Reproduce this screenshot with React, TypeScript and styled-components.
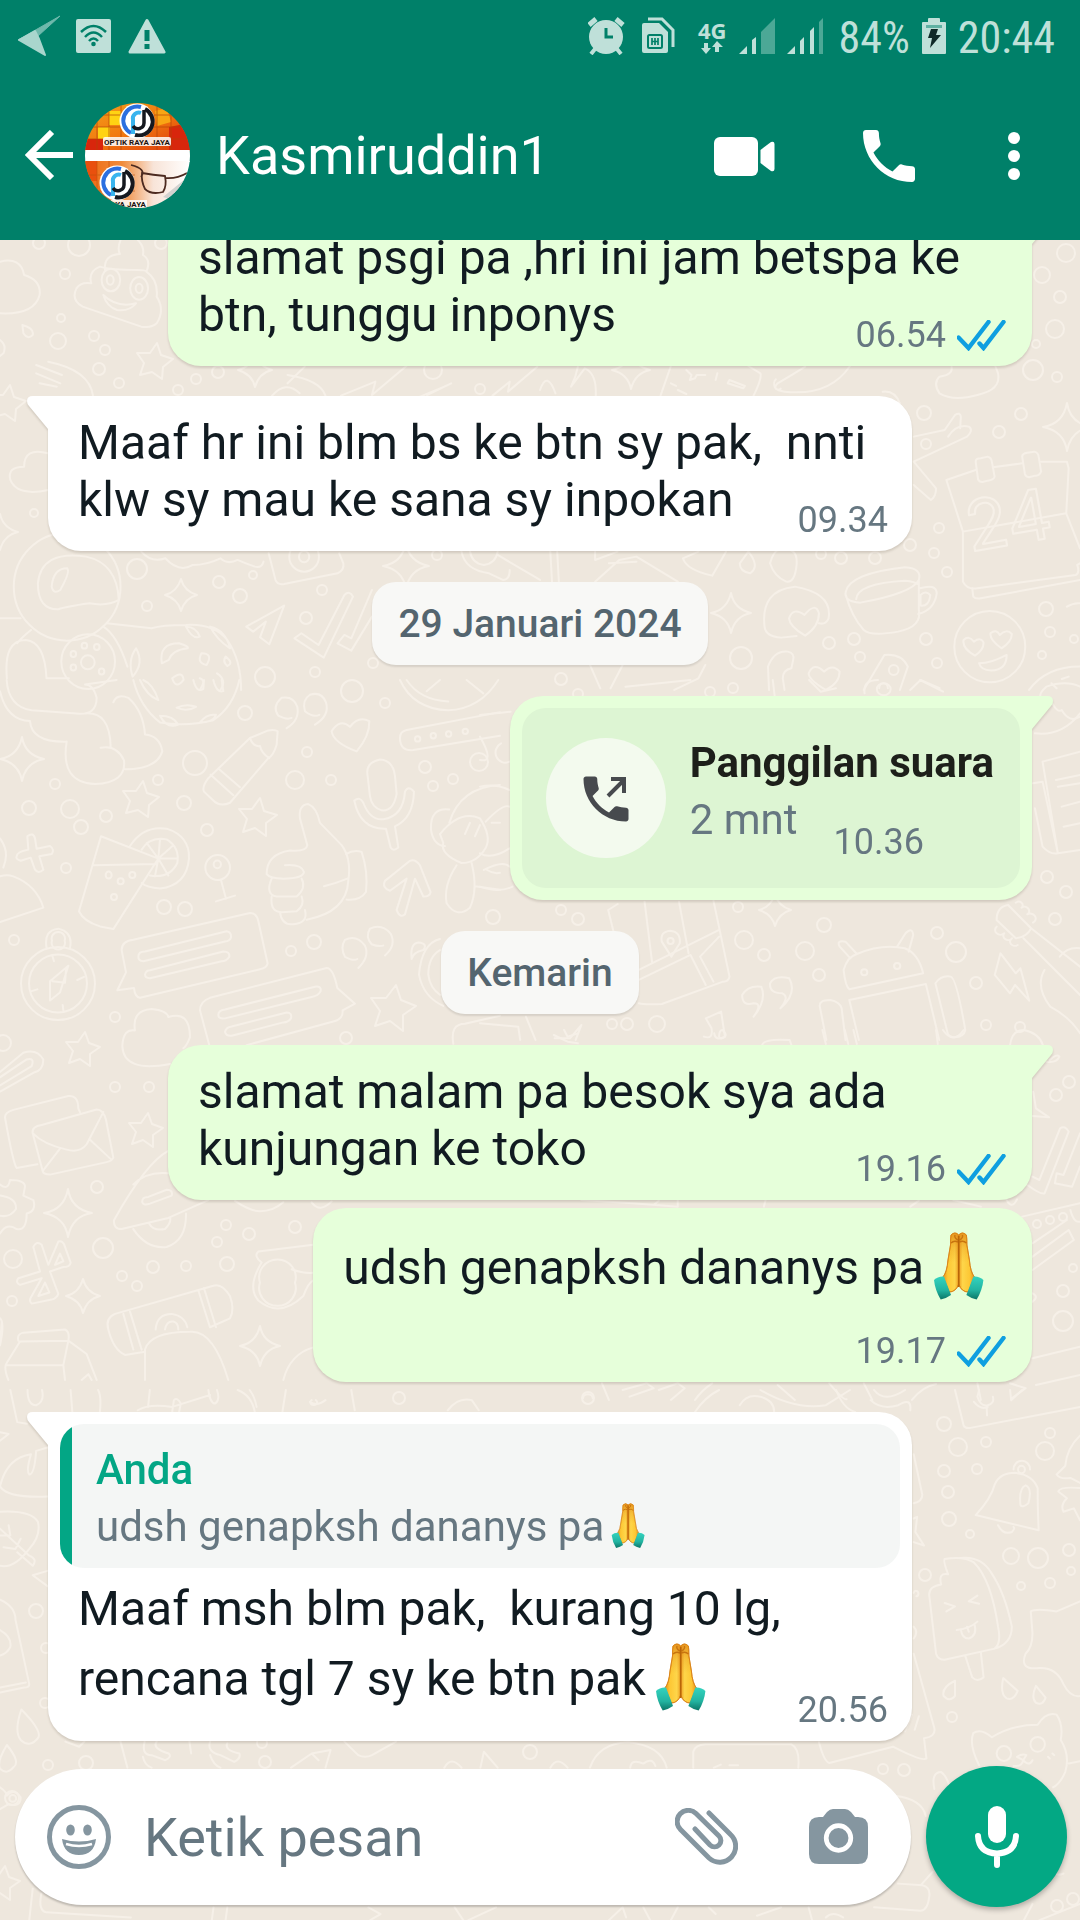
import React from "react";
import styled, { createGlobalStyle } from "styled-components";

const GlobalStyle = createGlobalStyle`
  *, *::before, *::after { box-sizing: border-box; }
  html, body { margin: 0; padding: 0; }
  body { font-family: Roboto, "Noto Sans", sans-serif; background: #eee7dd; }
  button { font: inherit; color: inherit; background: none; border: 0; padding: 0; cursor: pointer; }
  svg { display: block; flex: none; }
`;

/* ---------- layout ---------- */

const Screen = styled.div`
  height: 100vh;
  display: flex;
  flex-direction: column;
  overflow: hidden;
`;

const Header = styled.header`
  flex: none;
  background: #008069;
  color: #fff;
  position: relative;
  z-index: 1;
`;

const StatusBar = styled.div`
  height: 72px;
  padding: 0 25px 0 18px;
  display: flex;
  align-items: center;
  justify-content: space-between;
  color: #bfe0d9;
`;

const StatusGroup = styled.div<{ $gap: number }>`
  display: flex;
  align-items: center;
  gap: ${(p) => p.$gap}px;
`;

const StatusText = styled.span`
  padding-top: 3px;
  font-family: "Roboto Condensed", Roboto, sans-serif;
  font-size: 44px;
  line-height: 46px;
`;

const NetType = styled.span`
  display: flex;
  flex-direction: column;
  align-items: center;
  font-family: "Open Sans", "Noto Sans", sans-serif;
  font-size: 22px;
  font-weight: 700;
  line-height: 22px;
`;

const AppBar = styled.div`
  height: 168px;
  padding: 0 54px 0 25px;
  display: flex;
  align-items: center;
`;

const Back = styled.button`
  display: flex;
  align-items: center;
  gap: 10px;
  padding-bottom: 2px;
`;

const Title = styled.h1`
  flex: 1;
  margin: 0 0 0 26px;
  font-size: 54px;
  font-weight: 400;
  line-height: 64px;
`;

const Actions = styled.div`
  display: flex;
  align-items: center;
  gap: 87px;
`;

const IconButton = styled.button`
  display: flex;
  align-items: center;
  justify-content: center;
`;

const Body = styled.main`
  flex: 1;
  min-height: 0;
  position: relative;
  display: flex;
  flex-direction: column;
  background: #eee7dd;
`;

const Paper = styled.svg`
  position: absolute;
  inset: 0;
  width: 100%;
  height: 100%;
  fill: none;
  stroke: #f6f0e8;
  stroke-width: 2;
  stroke-linecap: round;
  stroke-linejoin: round;
  path, ellipse, circle, rect { vector-effect: non-scaling-stroke; }
`;

const Messages = styled.section`
  flex: 1;
  min-height: 0;
  position: relative;
  display: flex;
  flex-direction: column;
  justify-content: flex-end;
  overflow: hidden;
  padding: 0 48px 25px;
`;

/* ---------- messages ---------- */

const DayChip = styled.time`
  flex: none;
  align-self: center;
  margin: 31px 0 1px;
  padding: 19px 26px 18px;
  border-radius: 24px;
  background: #f8f8f6;
  box-shadow: 0 2px 2px rgba(0, 0, 0, 0.1);
  color: #54656f;
  font-size: 39px;
  font-weight: 500;
  line-height: 46px;
`;

type Side = "in" | "out";

const Bubble = styled.article<{ $side: Side; $tail: boolean; $joined?: boolean }>`
  flex: none;
  position: relative;
  align-self: ${(p) => (p.$side === "in" ? "flex-start" : "flex-end")};
  max-width: 864px;
  margin-top: ${(p) => (p.$joined ? 8 : 30)}px;
  border-radius: 33px;
  border-top-left-radius: ${(p) => (p.$tail && p.$side === "in" ? 0 : 33)}px;
  border-top-right-radius: ${(p) => (p.$tail && p.$side === "out" ? 0 : 33)}px;
  background: ${(p) => (p.$side === "in" ? "#fff" : "#e6ffda")};
  color: #111b21;
  filter: drop-shadow(0 2px 1px rgba(60, 50, 30, 0.16));
`;

const TailShape = styled.svg<{ $side: Side }>`
  position: absolute;
  top: 0;
  ${(p) => (p.$side === "in" ? "right: 100%;" : "left: 100%;")}
  fill: ${(p) => (p.$side === "in" ? "#fff" : "#e6ffda")};
`;

const Content = styled.div<{ $afterQuote?: boolean }>`
  display: grid;
  padding: ${(p) => (p.$afterQuote ? 12 : 18)}px 24px 10px;
`;

const Words = styled.p`
  grid-area: 1 / 1;
  margin: 0;
  padding: 0 6px 13px;
  font-size: 48px;
  line-height: 57px;
  white-space: pre-wrap;
`;

const Meta = styled.footer<{ $below?: boolean }>`
  grid-area: ${(p) => (p.$below ? "2 / 1" : "1 / 1")};
  align-self: end;
  justify-self: end;
  display: flex;
  align-items: center;
  gap: 11px;
  margin-top: ${(p) => (p.$below ? 10 : 0)}px;
  color: #667781;
  font-size: 36px;
  line-height: 42px;
`;

const Quote = styled.blockquote`
  margin: 0 12px;
  padding: 21px 24px 13px 36px;
  border-radius: 24px;
  background: linear-gradient(to right, #03a685 12px, #f4f6f5 12px);
  color: #667781;
  font-size: 42px;
  line-height: 56px;
`;

const QuoteWrap = styled.div`
  padding-top: 12px;
  width: 864px;
  max-width: 100%;
`;

const QuoteName = styled.strong`
  display: block;
  margin-bottom: 4px;
  color: #03a685;
  font-weight: 500;
  line-height: 50px;
`;

const Hands = styled.svg<{ $drop: number }>`
  display: inline-block;
  vertical-align: ${(p) => -p.$drop}px;
`;

const CallCard = styled.div`
  display: flex;
  align-items: center;
  gap: 24px;
  margin: 12px;
  padding: 30px 26px 30px 24px;
  border-radius: 24px;
  background: #ddf5d3;
`;

const CallDisc = styled.span`
  width: 120px;
  height: 120px;
  flex: none;
  display: flex;
  align-items: center;
  justify-content: center;
  border-radius: 50%;
  background: #f3faee;
`;

const CallInfo = styled.div`
  display: flex;
  flex-direction: column;
  padding-bottom: 13px;
  font-size: 42px;
  line-height: 50px;
`;

const CallTitle = styled.strong`
  margin-bottom: 7px;
  color: #1d1f1a;
  font-weight: 700;
`;

const CallDetail = styled.div`
  display: flex;
  height: 50px;
  gap: 36px;
  color: #667781;
  time { font-size: 36px; padding-top: 26px; line-height: 42px; }
`;

/* ---------- composer ---------- */

const Composer = styled.form`
  flex: none;
  position: relative;
  display: flex;
  align-items: center;
  gap: 15px;
  padding: 0 13px 13px 15px;
`;

const Field = styled.div`
  flex: 1;
  min-width: 0;
  height: 136px;
  display: flex;
  align-items: center;
  padding: 0 43px 0 32px;
  border-radius: 68px;
  background: #fff;
  box-shadow: 0 2px 2px rgba(0, 0, 0, 0.2);
  color: #8596a0;
`;

const TextBox = styled.input`
  flex: 1;
  min-width: 0;
  margin-left: 33px;
  padding: 2px 0 0;
  border: 0;
  outline: 0;
  background: none;
  color: #111b21;
  font-family: Roboto, sans-serif;
  font-size: 54px;
  line-height: 64px;
  &::placeholder { color: #667781; opacity: 1; }
`;

const FieldActions = styled.div`
  display: flex;
  align-items: center;
  gap: 71px;
`;

const Record = styled.button`
  width: 141px;
  height: 141px;
  flex: none;
  display: flex;
  align-items: center;
  justify-content: center;
  border-radius: 50%;
  background: #03a884;
  box-shadow: 0 3px 5px rgba(0, 0, 0, 0.25);
`;

/* ---------- icons ---------- */

const PHONE =
  "M6.62 10.79c1.44 2.83 3.76 5.14 6.59 6.59l2.2-2.2c.27-.27.67-.36 1.02-.24 1.12.37 2.33.57 3.57.57.55 0 1 .45 1 1V20c0 .55-.45 1-1 1-9.39 0-17-7.61-17-17 0-.55.45-1 1-1h3.5c.55 0 1 .45 1 1 0 1.25.2 2.45.57 3.57.11.35.03.74-.25 1.02l-2.2 2.2z";

function Ticks() {
  return (
    <svg width="51" height="31" viewBox="0 0 51 31" fill="none" stroke="#0f9fe0" strokeWidth="4.4" role="img" aria-label="Dibaca">
      <path d="M1.500 17.500L11.500 28L31.500 2" strokeLinecap="round" />
      <path d="M22.500 23.500L26.500 28L46.500 2" strokeLinecap="round" />
    </svg>
  );
}

function Pray({ small }: { small?: boolean }) {
  return (
    <Hands
      $drop={small ? 12 : 23}
      width={small ? 54 : 78}
      height={small ? 54 : 81}
      viewBox={small ? "0 0 80 81" : "1 0 78 81"}
      role="img"
      aria-label="🙏"
    >
      <defs>
        <linearGradient id="palm" x1="0" x2="1">
          <stop offset="0" stopColor="#e8921d" />
          <stop offset=".3" stopColor="#fdc734" />
          <stop offset=".75" stopColor="#fed64a" />
          <stop offset="1" stopColor="#eda024" />
        </linearGradient>
        <linearGradient id="tips" x1="0" y1="0" x2="0" y2="1">
          <stop offset="0" stopColor="#df8414" stopOpacity=".75" />
          <stop offset=".25" stopColor="#df8414" stopOpacity=".25" />
          <stop offset=".5" stopColor="#df8414" stopOpacity="0" />
        </linearGradient>
        <linearGradient id="cuff" x1="0" y1="0" x2="0" y2="1">
          <stop offset="0" stopColor="#34d3bf" />
          <stop offset=".6" stopColor="#22b3a0" />
          <stop offset="1" stopColor="#0b7566" />
        </linearGradient>
      </defs>
      {["", "translate(71.4 0) scale(-1 1)"].map((t) => (
        <g key={t} transform={t}>
          {["url(#palm)", "url(#tips)"].map((f) => (
            <path key={f} d="M28 9Q32 5 35.700 9V58Q33 66 26 66L20 51Q24 46 25 34L27.500 19Q27.500 12 28 9Z" fill={f} stroke="#d98214" strokeWidth=".8" />
          ))}
          <path d="M28 17Q31 14 35 16M32 9Q31 12 35 14" fill="none" stroke="#c8740f" strokeWidth="1.400" />
          <path d="M11 54Q15 50 21 50.500L28 69Q24 72 17.700 73.500Q12 64 11 54Z" fill="url(#cuff)" />
        </g>
      ))}
      <path d="M35.700 10V61" stroke="#b96508" strokeWidth="1.600" />
    </Hands>
  );
}

function Avatar() {
  const logo = (x: number, y: number) => (
    <g transform={`translate(${x} ${y})`}>
      <circle r="17.500" fill="#fff" />
      <path d="M-6 12A14 14 0 0 1 4-14" fill="none" stroke="#2b6fe0" strokeWidth="4" />
      <path d="M-4 13V-1A6 6 0 0 1 4-8" fill="none" stroke="#39b4ee" strokeWidth="4" />
      <path d="M8-12A14 14 0 0 1-2 14" fill="none" stroke="#15181f" strokeWidth="4" />
      <path d="M7-11V2A6 6 0 0 1-4 5" fill="none" stroke="#15181f" strokeWidth="3.500" />
    </g>
  );
  return (
    <svg width="105" height="105" viewBox="0 0 105 105" role="img" aria-label="Foto profil">
      <defs>
        <clipPath id="disc"><circle cx="52.500" cy="52.500" r="52.500" /></clipPath>
        <linearGradient id="fire" x1="0" x2="1" y1="0" y2="1">
          <stop offset="0" stopColor="#f3a41c" />
          <stop offset=".5" stopColor="#f2780f" />
          <stop offset="1" stopColor="#d9330c" />
        </linearGradient>
        <linearGradient id="fade" x1="0" x2="1">
          <stop offset="0" stopColor="#ee6a12" />
          <stop offset=".35" stopColor="#f08a3a" />
          <stop offset=".65" stopColor="#f8e4d8" />
          <stop offset="1" stopColor="#fff" />
        </linearGradient>
      </defs>
      <g clipPath="url(#disc)">
        <rect width="105" height="48" fill="url(#fire)" />
        <path d="M24 8h12v14h-12zM13 24h12v12h-12z" fill="#ffd313" />
        <path d="M0 36h18v12h-18zM84 24l21-4v28h-21z" fill="#d8260c" />
        <path d="M70 8l12-3 4 14-14 4z" fill="#f9a514" />
        <path d="M12 0V48M24 0V48M36 0V48M72 0V48M86 0V48M0 12H105M0 24H105M0 36H105" stroke="#b44708" strokeWidth="1" opacity=".7" />
        <rect y="47" width="105" height="12" fill="#fff" />
        <rect y="58" width="105" height="47" fill="url(#fade)" />
        <path d="M0 58h12v20h-12z" fill="#e9500e" />
        <path d="M12 58V105M24 58V105M0 72H50M0 88H50" stroke="#c4520c" strokeWidth="1" opacity=".6" />
        <path d="M78 94l27-22v30z" fill="#d4d2d0" />
        <path d="M57 70Q68 72 80 73Q82 83 78 89Q66 92 60 86Q56 78 57 70ZM80 75Q92 76 102 70M56 74Q62 66 46 62" fill="none" stroke="#4c2a20" strokeWidth="1.800" />
        {logo(52, 18)}
        {logo(32, 80)}
        <rect x="18" y="34" width="68" height="9" rx="2" fill="#fff" opacity=".85" />
        <text x="52" y="42" fontSize="8" fontWeight="700" textAnchor="middle" fill="#20140f">OPTIK RAYA JAYA</text>
        <rect x="26" y="97" width="36" height="8" fill="#fff" opacity=".85" />
        <text x="61" y="104" fontSize="8" fontWeight="700" textAnchor="end" fill="#20140f">RAYA JAYA</text>
      </g>
    </svg>
  );
}

/* ---------- wallpaper ---------- */

/* x, y, radius of each bubble of the doodle paper */
const RINGS: number[][] = [
  [39,243,6],[79,245,11],[161,243,6],[65,274,5],[61,318,4],[58,341,8],[94,336,5],[105,350,5],[99,369,6],[119,383,5],[196,379,5],[218,372,6],[178,390,5],
  [137,569,10],[147,606,5],[219,582,6],[240,596,7],[253,575,4],[322,590,5],[306,618,6],[315,672,5],[373,663,5],[265,677,10],[34,513,4],[433,370,9],[480,389,5],[437,555,5],
  [1066,253,9],[1042,275,8],[1060,297,6],[1055,329,9],[1036,344,4],[1033,370,10],[1057,377,5],[924,413,7],[1021,414,6],[999,432,6],[926,444,5],[939,528,5],[910,545,6],[934,553,5],
  [947,572,5],[841,558,6],[875,558,6],[821,554,5],[1046,609,7],[1050,632,5],[1042,655,4],[937,663,5],[926,639,6],[854,639,6],[829,643,6],[860,657,5],[741,658,11],[561,679,6],[1074,639,4],
  [55,784,5],[29,808,7],[70,809,9],[81,827,7],[106,816,6],[158,780,5],[195,763,12],[184,803,7],[245,713,7],[352,691,11],[385,703,5],[307,752,5],[295,780,9],[331,780,5],[425,767,6],
  [479,762,9],[453,779,5],[433,786,5],[207,830,6],[66,868,5],[164,907,7],[185,909,7],[14,940,5],[115,1017,5],[291,951,5],[314,942,7],[115,1087,5],[149,1087,5],[97,1187,6],[103,1248,10],
  [13,1259,9],[122,1276,5],[137,1286,5],[153,1267,6],[186,1266,5],[217,1242,5],[226,1225,5],[249,1234,6],[295,1227,6],[227,1264,7],[12,1301,5],[3,1043,8],[346,1038,6],[493,917,7],
  [561,910,5],[578,919,6],[738,907,5],[744,940,9],[764,955,6],[824,925,7],[805,951,9],[819,975,6],[937,933,6],[956,952,10],[976,983,6],[1055,919,6],[1047,877,6],[1066,892,6],[627,1024,6],
  [657,1024,8],[612,1024,5],[986,1025,5],[1020,1027,5],[733,688,5],[710,692,5],[578,694,5],[1069,1082,6],[1056,1095,6],[1063,1291,6],[1063,1321,10],[1073,1268,4],[1037,1224,4],[1050,1220,4],[1063,1217,4],
  [588,1398,6],[944,1424,7],[958,1447,9],[986,1442,5],[1050,1433,5],[1045,1451,9],[944,1471,6],[977,1469,5],[948,1492,6],[949,1519,7],[970,1534,4],[1011,1556,8],[1038,1558,10],[1069,1550,6],
  [1071,1571,4],[1050,1583,5],[1021,1586,4],[925,1575,6],[952,1717,5],[883,1769,5],[904,1770,6],[1057,1906,6],[1073,1899,6],[36,1611,7],[48,1765,5],[86,1763,7],[265,1762,6],[399,1398,6],
  [530,1752,7],[262,1743,5],[12,1798,7],[46,1648,5],[45,1703,5],
];

const STARS: number[][] = [[154,362,19],[7,404,19],[140,800,19],[257,818,20],[392,1009,24],[82,1050,18],[145,1131,18],[2,1884,18]];
const SPARKS: number[][] = [
  [255,370,17],[181,595,16],[406,566,23],[0,532,18],[1067,427,24],[731,613,20],[631,370,19],[22,759,22],[68,1213,24],[83,1296,17],[260,1346,20],[775,910,16],
];

const starPath = ([x, y, r]: number[]) =>
  "M" +
  Array.from({ length: 10 }, (_, i) => {
    const a = (i * Math.PI) / 5 - 1.4;
    const q = i % 2 ? r * 0.52 : r;
    return `${Math.round(x + q * Math.cos(a))} ${Math.round(y + q * Math.sin(a))}`;
  }).join("L") +
  "Z";

const sparkPath = ([x, y, r]: number[]) =>
  `M${x} ${y - r}Q${x + 3} ${y - 4} ${x + r} ${y}Q${x + 4} ${y + 3} ${x} ${y + r}Q${x - 3} ${y + 4} ${x - r} ${y}Q${x - 4} ${y - 3} ${x} ${y - r}Z`;

/* Line drawings, grouped by the part of the paper that they fill. */
const SHEETS: { move: string; paths: string[] }[] = [
  {
    move: "translate(0 230) scale(.3444 .3333)",
    paths: [
      "M0 95Q60 80 70 135Q120 150 115 195Q100 255 0 250",
      "M350 30Q340 55 348 72Q300 75 305 120M400 30Q420 50 415 75Q440 90 425 125Q460 150 455 200Q480 240 455 280Q440 295 410 290L240 230Q205 210 222 175Q235 155 265 160M265 160Q255 125 290 110Q320 120 400 120Q425 120 425 125",
      "M300 195Q340 235 395 220Q375 245 340 240Q310 230 300 195Z",
      "M295 150a27 34 0 1 0 54 0a27 34 0 1 0-54 0M310 150a10 14 0 1 0 20 0a10 14 0 1 0-20 0M378 175a26 34 0 1 0 52 0a26 34 0 1 0-52 0M394 175a10 14 0 1 0 20 0a10 14 0 1 0-20 0",
      "M65 285Q100 295 95 315Q80 330 68 310ZM0 330Q20 345 10 370L0 378",
      "M105 405L180 435M105 430L175 460M115 460L165 470M140 395Q260 420 270 497",
      "M140 670Q70 650 70 710Q20 710 30 750Q50 800 140 780",
      "M780 970L800 1050Q805 1065 825 1062L980 1030Q1000 1020 997 1000L985 970M840 980a43 45 0 1 0 86 0a43 45 0 1 0-86 0M868 980a15 17 0 1 0 30 0a15 17 0 1 0-30 0",
      "M765 995Q760 1015 740 1010Q710 1000 690 990Q660 1005 640 985Q600 1005 560 1005Q520 1030 480 985Q440 1000 410 965",
      "M40 1070a155 162 0 1 0 310 0a155 162 0 1 0-310 0M110 1060Q120 960 250 980Q340 1000 345 1110Q310 1130 260 1120Q190 1130 170 1138Q110 1140 110 1060ZM150 1070Q155 1015 195 1015Q205 1025 175 1080Q155 1095 150 1070Z",
      "M300 1190Q340 1215 370 1310M90 1200Q60 1225 50 1240M20 1345Q10 1230 75 1230Q130 1235 135 1345L200 1345M0 1165L60 1165",
      "M178 1295a78 82 0 1 0 156 0a78 82 0 1 0-156 0M235 1297a20 21 0 1 0 40 0a20 21 0 1 0-40 0M205 1272a8 9 0 1 0 16 0a8 9 0 1 0-16 0M237 1247a8 9 0 1 0 16 0a8 9 0 1 0-16 0M273 1251a8 9 0 1 0 16 0a8 9 0 1 0-16 0M205 1313a8 9 0 1 0 16 0a8 9 0 1 0-16 0M287 1325a8 9 0 1 0 16 0a8 9 0 1 0-16 0",
      "M310 1180L440 1195Q470 1185 540 1185Q620 1180 660 1230Q700 1290 700 1380M540 1190Q570 1190 580 1220Q560 1230 540 1190M610 1190Q655 1200 668 1255Q630 1230 610 1190M470 1300Q460 1240 520 1240Q550 1250 545 1255Q500 1260 490 1290ZM395 1255Q420 1300 385 1340Q370 1290 395 1255ZM585 1270Q620 1270 600 1305Q570 1300 585 1270ZM655 1280Q680 1300 660 1308Q645 1295 655 1280ZM500 1345Q530 1320 533 1350Q510 1380 500 1345M580 1345Q600 1350 580 1380M630 1330Q660 1350 640 1380",
      "M715 1190L825 1127L782 1243L755 1222L772 1175L735 1205Z",
      "M855 1225L875 1210L925 1245L1000 1095Q1015 1080 1025 1100L940 1283ZM980 1240L1000 1215L1020 1225L1080 1080M980 1240L1020 1262L1080 1160",
      "M790 497Q830 450 870 490M835 460L885 410M835 435Q930 450 945 497M990 497L1090 455L1080 495L1180 408M1240 495L1310 460M1220 500L1290 470M1430 497L1480 455L1475 485L1560 410",
      "M1340 965Q1350 1020 1420 1030L1460 1050Q1480 1050 1480 1020M1365 965Q1370 1000 1405 1005Q1440 1000 1445 965M1445 975L1568 1050",
    ],
  },
  {
    move: "translate(540 230) scale(.3444 .3333)",
    paths: [
      "M0 480Q20 420 45 490M90 470L130 415Q165 430 162 497M90 470Q105 440 110 410",
      "M380 408L350 497M605 408L640 430Q645 445 620 497M550 450L595 468L590 475L545 460ZM515 430L510 450M380 460L395 468M400 480L425 492M425 420L440 435L435 450L450 445L455 435L480 435",
      "M690 460Q740 430 770 410M690 460Q670 480 710 485Q840 500 900 408M685 448a10 14 0 1 0 14 28",
      "M1195 410Q1200 435 1160 440Q1140 460 1160 490Q1200 515 1270 495Q1340 480 1330 430L1322 408M995 485Q1030 480 1045 520",
      "M1085 620L1175 600L1205 555Q1220 545 1222 560L1220 595M1085 695L1240 620Q1260 600 1245 590Q1210 580 1185 620M1085 695L1150 775Q1150 800 1135 810L1085 765",
      "M1180 750L1265 720M1315 712L1400 700M1455 695L1530 695L1535 715L1528 850L1568 955M1180 750L1228 905L1228 1055Q1240 1080 1270 1075L1555 1035Q1568 1030 1560 1005L1568 1000M1228 905L1528 850M1255 1075L1258 1100Q1265 1108 1280 1105L1568 1050",
      "M1265 695Q1265 685 1280 685L1300 680Q1310 682 1312 695L1320 740Q1318 750 1300 752L1285 756Q1275 756 1272 748ZM1400 680Q1400 670 1415 668L1435 665Q1447 668 1448 680L1455 725Q1450 738 1438 737L1420 742Q1410 740 1408 732Z",
      "M50 965L55 1060M30 965L35 1060M160 965L160 990L225 965M160 1055L230 990L280 980L400 1055M200 1000L280 995M460 965L415 985Q425 1020 500 1037L540 965M605 965Q640 1010 610 1030Q580 1025 580 1000ZM668 1000Q680 955 700 960Q750 950 745 1005Q740 1060 715 1055Q680 1040 668 1000Z",
      "M888 1085Q900 1030 1060 1012Q1110 1015 1100 1050Q1080 1090 930 1118Q880 1115 888 1085ZM918 1108Q920 1060 1060 1052Q1090 1055 1095 1062M888 1095Q905 1160 940 1200Q960 1220 1040 1205Q1110 1190 1100 1140L1100 1050M1103 1075Q1150 1060 1152 1090Q1145 1140 1098 1152M1105 1095Q1120 1080 1133 1095Q1130 1130 1105 1127Z",
      "M652 1190Q640 1080 740 1070Q850 1090 838 1165Q830 1185 810 1180M652 1190Q655 1220 700 1223L745 1218M770 1217Q725 1190 723 1165Q735 1130 768 1155Q800 1115 810 1150Q810 1190 770 1217Z",
      "M1203 1250a103 107 0 1 0 206 0a103 107 0 1 0-206 0M1263 1277Q1225 1255 1230 1230Q1245 1215 1260 1235Q1280 1220 1288 1238Q1288 1260 1263 1277ZM1340 1255Q1305 1230 1308 1210Q1325 1195 1335 1215Q1355 1195 1370 1212Q1370 1235 1340 1255ZM1275 1300Q1310 1300 1355 1275Q1355 1320 1310 1322Q1280 1320 1275 1300Z",
      "M665 1380L662 1310Q680 1260 720 1265Q740 1270 735 1290L730 1315Q705 1320 705 1345L710 1380M830 1380Q780 1350 780 1330Q795 1295 825 1325Q850 1300 870 1325Q870 1360 830 1380Z",
      "M940 1380L1000 1275Q1050 1270 1068 1310L1045 1380M1013 1320a14 15 0 1 0 28 0a14 15 0 1 0-28 0M985 1375a10 12 0 1 1 25 0M1075 1380L1105 1350L1160 1375M1420 1380Q1470 1310 1568 1310M1515 1347L1535 1340M1485 1360L1500 1375",
      "M145 1305L175 1375M240 1305L205 1375M480 1305L460 1345L390 1380M1530 1130Q1550 1118 1568 1120",
    ],
  },
  {
    move: "translate(480 680) scale(.3827 .3333)",
    paths: [
      "M0 105L80 95M0 240Q40 250 0 170M55 190a20 24 0 1 0 22 55M0 320Q40 310 77 330M15 425Q60 370 77 380M0 520Q30 540 77 505M10 570Q60 540 77 560M0 620Q50 640 85 620",
      "M335 690L360 672M335 690L365 830M430 665L450 850M520 665L545 820M610 662L652 890Q650 905 635 905L475 972Q430 975 415 970M625 750L415 870M625 770L575 830L610 905M550 825L415 900M550 825L590 915",
      "M500 830L475 785Q470 755 497 752Q525 755 522 790ZM490 783a8 9 0 1 0 16 0a8 9 0 1 0-16 0",
      "M950 870Q955 920 965 928L1158 880Q1145 820 1110 805M950 870Q960 830 985 822M985 822Q1050 790 1110 805M985 822L955 785Q930 780 940 800L968 835M1090 800L1112 760Q1130 740 1132 765L1120 815M996 877a8 9 0 1 0 16 0a8 9 0 1 0-16 0M1082 858a8 9 0 1 0 16 0a8 9 0 1 0-16 0",
      "M965 960L1165 912L1200 1080M965 960L990 1080M888 980Q885 960 915 960Q940 965 945 985L955 1080M888 980L905 1080M1190 910Q1205 885 1230 890Q1245 895 1268 1050Q1265 1070 1240 1072Q1225 1070 1222 1060Z",
      "M715 1010Q740 970 715 970Q685 980 685 945Q700 915 735 920Q750 960 715 1010M785 985Q810 950 790 940Q755 940 758 910Q770 885 808 895Q830 940 785 985",
      "M1360 820L1345 885L1385 940L1398 915L1435 962L1412 865L1400 880Z",
      "M1350 720Q1350 680 1380 675L1440 745Q1430 770 1400 775ZM1400 668a10 10 0 1 1 15 15a10 10 0 1 1 15 20a10 10 0 1 1 15 25M1350 740a10 10 0 1 0 20 20a10 10 0 1 0 20 15a10 10 0 1 0 15 20M1440 745L1568 860M1420 775L1568 945M1515 830Q1535 800 1568 805M1475 870Q1450 920 1490 980Q1540 1010 1568 1060",
      "M585 1070Q610 1080 605 1045L590 1015L630 995L640 1070Q615 1085 612 1060",
      "M0 1030L100 1040L105 1080M120 1010L145 1080M195 1075L235 1075L265 1035L250 1080",
      "M1450 160Q1520 170 1568 100M1445 310L1470 305L1510 520Q1490 525 1470 500L1450 385M1470 245L1568 215M1470 245L1510 520L1568 510M1505 300L1568 285M1510 320L1568 310M1520 380L1568 365M1525 440L1568 430",
      "M1568 20Q1530 0 1480 20Q1460 40 1465 50M1495 70Q1510 100 1520 90Q1540 130 1568 110M380 20L550 0M765 0L770 48M860 0L890 35L930 25M1005 40Q1000 0 1040 0M1037 28a18 18 0 1 0 36 0a18 18 0 1 0-36 0M1150 0L1210 35",
    ],
  },
  {
    move: "translate(0 680) scale(.3333 .4464)",
    paths: [
      "M20 0Q25 60 95 68L230 75Q290 80 290 40Q280 10 255 10L350 0M0 25Q20 90 90 92Q95 140 200 138M255 75Q330 70 332 150M340 50Q350 30 385 40Q430 70 435 122Q480 125 487 160Q470 200 375 200M200 138Q180 230 285 233Q380 230 372 180Q350 145 302 152",
      "M400 0Q420 60 480 95Q560 105 640 90Q700 60 718 0M420 0Q440 35 475 45Q460 10 430 0M480 80Q520 80 535 100Q500 110 480 80M530 62Q560 52 588 60Q560 72 530 62M580 0Q590 30 610 20L612 0M640 0Q650 30 670 25L665 0M600 95Q620 75 648 78Q640 95 600 95",
      "M860 108Q900 90 892 60Q880 35 845 40Q815 60 835 80Q860 90 875 85M945 100Q990 80 978 50Q965 25 930 33Q905 45 915 70Q940 85 958 78",
      "M1070 160Q1000 140 995 115Q1020 85 1050 105Q1075 80 1108 92Q1110 125 1070 160Z",
      "M750 130L805 113Q825 110 833 115L830 145Q820 170 805 175L690 275Q660 285 640 270L612 250Q605 240 625 220ZM750 130Q760 150 780 148Q785 165 808 175M655 198L720 240M632 212L700 258",
      "M1200 130Q1200 115 1220 112L1500 72M1200 130Q1200 160 1240 157L1500 125M1245 132a8 6 0 1 0 16 0a8 6 0 1 0-16 0M1292 125a8 6 0 1 0 16 0a8 6 0 1 0-16 0M1338 121a8 6 0 1 0 16 0a8 6 0 1 0-16 0M1388 115a8 6 0 1 0 16 0a8 6 0 1 0-16 0",
      "M1103 215Q1095 185 1140 178Q1180 180 1185 215L1190 255Q1180 295 1145 292Q1115 285 1110 260ZM1063 270Q1080 260 1090 275Q1110 315 1150 312Q1210 305 1215 250Q1225 235 1242 250Q1240 310 1185 328L1195 375Q1180 385 1172 375L1158 333Q1080 335 1063 270",
      "M1200 0Q1240 65 1345 68Q1440 65 1495 0M1220 0Q1260 45 1345 48M1280 25L1320 0M1400 0L1450 30",
      "M900 310Q895 280 925 278Q950 285 960 320L1025 370Q1055 400 1045 450Q1040 520 920 537M900 310L922 370Q920 385 870 382Q800 390 800 435Q810 445 850 445Q910 445 912 430Q905 412 855 415M815 445Q795 480 830 485L890 485Q920 465 905 445M815 485Q810 520 845 520L890 518Q915 505 905 485M840 520Q845 550 880 547Q925 545 915 515M972 462Q1010 455 1042 445M1038 390Q1060 380 1085 385Q1105 430 1098 475Q1080 495 1040 492",
      "M1155 450Q1145 465 1170 472L1220 445L1190 515Q1200 535 1215 525L1245 445L1270 485Q1290 485 1292 475L1260 415Q1245 400 1230 405Z",
      "M1500 235Q1380 240 1348 320M1348 290Q1290 285 1293 335Q1300 370 1335 372M1320 345Q1380 290 1440 310Q1475 350 1458 375Q1430 410 1385 410Q1320 390 1330 365L1320 345M1395 345L1410 320M1425 350L1440 325M1370 415Q1330 460 1340 500Q1370 535 1410 510Q1435 470 1415 410M1475 320L1500 320M1460 425Q1480 435 1500 432M1425 462L1500 470",
      "M0 355Q30 385 10 420M0 440Q20 435 40 440Q110 460 130 510L0 542",
      "M50 395Q50 385 85 380L82 350Q100 340 105 355L110 378L150 372Q165 380 155 390L118 395L130 425Q115 435 105 425L92 398L62 405Q45 400 50 395Z",
      "M303 350L475 400L340 558L300 552Q250 540 237 518ZM280 415L470 412M390 372Q430 325 500 333Q570 350 567 400Q560 460 480 467Q440 465 425 455M425 380Q450 350 500 357Q540 375 532 410Q510 445 450 438M475 400L480 357M475 400L520 370M475 400L532 400M475 400L505 438M475 400L465 440M475 400L440 365M317 437a8 7 0 1 0 18 0a8 7 0 1 0-18 0M353 451a8 6 0 1 0 18 0a8 6 0 1 0-18 0M388 437a8 6 0 1 0 18 0a8 6 0 1 0-18 0M333 486a8 6 0 1 0 18 0a8 6 0 1 0-18 0",
      "M616 420a36 27 0 1 0 74 0a36 27 0 1 0-74 0M641 413a10 8 0 1 0 22 0a10 8 0 1 0-22 0M663 448L678 490M648 496L705 483",
      "M63 680a110 81 0 1 0 222 0a110 81 0 1 0-222 0M87 680a87 65 0 1 0 174 0a87 65 0 1 0-174 0M140 602Q130 560 175 557Q220 565 210 600M156 584a20 15 0 1 0 38 0a20 15 0 1 0-38 0M205 640L150 675L150 718L180 700ZM158 675L195 678L198 650M158 620L162 630M95 697L112 693M232 672L252 665M188 728L190 740",
      "M365 605Q365 585 400 582L750 522Q770 522 775 540L803 635Q800 645 780 648L420 712Q405 710 402 690L352 695L378 655ZM415 620Q415 608 435 608L680 563Q695 565 693 577Q690 585 675 586L430 630Q415 630 415 620M435 660Q438 650 450 650L670 608Q690 608 688 620Q680 630 665 630L450 668Q435 668 435 660",
      "M600 740Q600 720 630 712L980 645Q1000 645 1012 690L1065 725L1028 740Q1030 760 1000 765L740 818M600 740L628 818M655 750Q655 740 675 738L945 687Q965 685 962 697Q955 708 935 710L675 758Q655 760 655 750M675 788Q678 778 695 776L860 745Q877 745 873 758Q865 767 850 767L695 797Q678 798 675 788",
      "M1075 645Q1110 620 1095 595Q1070 570 1035 582Q1020 600 1035 620Q1060 630 1072 625M1155 617Q1190 595 1172 568Q1145 545 1110 557Q1095 575 1115 592Q1135 598 1150 595M1235 625Q1230 590 1255 588Q1285 590 1270 605Q1240 610 1235 625M1320 580Q1265 590 1257 660Q1270 710 1330 730M1320 605Q1285 620 1285 660Q1290 690 1320 705",
      "M510 860Q370 880 367 820Q370 780 405 785Q395 740 455 737Q500 740 505 755Q570 740 570 800Q560 820 550 825M1360 815Q1350 770 1395 770L1500 752",
      "M0 890L80 850Q105 845 95 865L0 908M0 878L70 835Q110 825 130 850Q130 875 100 880L0 922",
      "M50 1093Q40 1085 15 980Q15 968 40 963L205 932Q235 930 235 960L240 968M50 1093L112 1085M98 1015Q95 1000 125 997L290 962Q310 962 318 985L340 1070Q335 1078 320 1080L150 1108Q130 1108 128 1100ZM98 1015Q130 1040 200 1052Q240 1060 260 1040L310 968M128 1100L180 1050M270 1030L335 1075",
      "M0 1130Q25 1145 30 1120Q75 1120 75 1135L70 1155L100 1165Q110 1190 80 1195Q80 1235 50 1230Q20 1215 0 1240M0 1155Q50 1160 48 1185Q30 1205 0 1200M505 1055Q440 1080 342 1210Q340 1230 365 1230L505 1205L625 1165M400 1130Q440 1100 505 1105M427 1170Q425 1158 445 1158L500 1142Q520 1142 515 1155L450 1173Q430 1178 427 1170M400 1230Q440 1275 500 1270Q560 1255 558 1195M448 1218Q460 1235 495 1230Q515 1215 510 1205M705 1167Q750 1190 780 1190Q820 1190 850 1170M935 1170Q960 1195 995 1168",
      "M100 1270Q110 1255 125 1265L145 1310L175 1258Q190 1255 195 1270L212 1305Q210 1315 190 1315L150 1325L175 1375Q170 1385 155 1388L95 1397Q85 1390 95 1380L125 1340L60 1355Q45 1350 55 1340L120 1325ZM165 1310L180 1285L190 1302ZM115 1380L135 1350L148 1372Z",
      "M325 1455Q315 1430 345 1420L640 1357Q665 1350 690 1380Q705 1410 690 1430L630 1450M325 1455Q340 1500 375 1512L435 1505M370 1420L400 1500M390 1415L425 1500M595 1367L630 1450M612 1362L648 1450M467 1455Q470 1420 515 1420Q555 1425 562 1450M495 1455Q500 1435 520 1437Q535 1440 535 1455M435 1568L435 1500Q450 1460 570 1460Q640 1455 685 1568",
      "M940 1265L775 1280Q760 1290 785 1305Q740 1360 775 1390Q840 1430 910 1380Q925 1350 940 1345M780 1350a55 40 0 1 0 105 0a55 40 0 1 0-105 0M875 1320Q910 1330 940 1328M850 1568Q870 1510 940 1495M0 1430Q15 1440 0 1490",
      "M55 1480Q50 1465 70 1462L195 1455Q210 1460 205 1480L60 1482L20 1530Q10 1540 25 1568M205 1480L260 1510L290 1568M205 1480L190 1535L20 1535M190 1535L195 1568M245 1568L265 1555L275 1568M0 1490L5 1440",
    ],
  },
  {
    move: "translate(540 1030) scale(.3444 .3333)",
    paths: [
      "M40 15L80 35L110 40M70 0L80 20L110 10M520 20Q520 0 530 0Q545 15 535 22Q525 30 520 20M645 45Q650 25 725 30L730 45M820 0L830 42M885 0L895 42M910 0L920 42M1150 0L1155 42M1170 0Q1200 45 1230 0M1365 45Q1370 0 1405 0Q1450 10 1460 45M1480 90Q1500 70 1508 80Q1500 100 1470 95M1432 185L1440 235L1478 262L1430 258",
      "M1430 440L1450 450L1510 295Q1525 285 1535 305L1465 490Q1455 495 1415 465M1495 460L1500 430L1520 435L1568 310M1495 460L1545 470L1568 410",
      "M1400 560L1568 520M1430 640L1530 570M1430 720L1550 630L1535 600L1430 680M1540 540Q1550 580 1568 575M1430 985L1568 950M1440 1065L1568 1035M1430 790Q1450 800 1430 815M1355 510Q1370 540 1385 508",
      "M120 510L270 520L400 530L400 510M330 525L345 512M650 530L655 510M1075 530L1100 512M1200 510L1280 530M180 1060L200 1110M240 1080L310 1060L330 1075L260 1100M345 1080L400 1060L420 1075L380 1110M450 1110Q470 1080 500 1060M690 1065L740 1110M840 1060Q880 1110 890 1108M940 1060L965 1110M1080 1110Q1110 1070 1150 1062M1270 1060L1280 1110M1365 1060L1410 1075L1370 1105M125 1105a14 12 0 1 1 28 0",
    ],
  },
  {
    move: "translate(0 1390) scale(.3444 .3381)",
    paths: [
      "M30 0L50 95L78 100M80 0Q80 45 105 45Q130 35 122 0M205 0L210 65M285 0Q295 20 290 65M435 0L430 50M400 60Q430 40 500 50L610 15M500 65L505 30Q515 20 525 40L520 65M605 0Q610 40 625 40Q640 30 630 0M690 0Q730 15 740 65M725 0Q740 20 745 50M820 65L830 0M905 30a10 8 0 1 0 12 0M900 35Q920 50 945 30M1020 0L1030 60M1300 60Q1330 20 1370 30L1390 60",
      "M0 125L25 130L0 150M0 285Q20 200 90 190Q75 240 85 250Q100 250 105 180L138 170M0 285Q20 320 138 315M0 360Q90 355 110 390Q120 430 85 470Q40 530 0 520M0 410L85 490Q110 500 95 520L50 480M25 400L30 430L0 430M60 440L45 470L10 465M138 535L95 548L138 580",
      "M0 620Q45 640 45 680L85 870Q85 880 70 880L0 895M0 880L75 865M0 710Q35 730 30 760Q20 780 0 785",
      "M62 945Q40 1010 60 1035Q85 1060 110 1030Q125 1010 62 945ZM20 1050Q-10 1100 0 1120Q20 1140 40 1115Q60 1100 20 1050Z",
      "M350 1040L370 1117M420 1040Q410 1080 440 1080L480 1095Q500 1085 490 1075Q440 1060 455 1040M415 1085Q420 1110 440 1117M550 1040L555 1075M610 1040Q600 1070 640 1080L680 1100Q700 1090 695 1075Q650 1065 660 1045M610 1080Q620 1110 640 1117M845 1117L905 1075L960 1065L945 1117M905 1075L925 1095M1000 1040L1040 1080Q1060 1090 1080 1080L1150 1040M1395 1117L1405 1070L1445 1117M1290 1117Q1310 1080 1340 1117M190 1040L230 1055L245 1040",
      "M0 1175Q20 1190 20 1200Q40 1175 60 1205Q60 1235 25 1225L0 1240M27 1208a10 10 0 1 0 20 0a10 10 0 1 0-20 0M95 1475L85 1568M120 1490Q110 1540 135 1545L380 1560M620 1530L615 1568M660 1530L655 1568M1070 1530L1105 1550L1075 1568M1320 1530L1345 1568M1360 1568L1440 1530",
    ],
  },
  {
    move: "translate(540 1390) scale(.3444 .3381)",
    paths: [
      "M1205 0L1230 105Q1235 115 1250 112L1568 50M1365 0L1368 30L1400 0M1275 0L1270 20Q1280 50 1300 45Q1320 40 1315 20M1260 35Q1280 60 1300 50M1297 50L1298 75M450 65Q480 20 520 0M580 45Q600 10 640 20Q680 30 680 65M640 0Q740 60 830 45L900 0M860 0Q880 55 915 65M960 30Q990 60 1040 45Q1080 20 1075 60M970 0Q1000 40 1060 0M1085 190L1110 310Q1110 330 1085 335",
      "M1265 370Q1310 320 1320 280Q1335 245 1380 245Q1430 250 1445 290Q1445 360 1448 415ZM1330 400Q1345 430 1370 420Q1380 410 1375 405M1375 235a24 26 0 1 1 48 0M1388 235a10 11 0 1 0 20 0a10 11 0 1 0-20 0M1395 340Q1390 290 1410 282Q1430 290 1418 335Q1400 350 1395 340Z",
      "M1568 135Q1530 170 1525 225L1500 250Q1510 265 1540 260L1568 275M1568 290Q1510 285 1505 300L1530 320Q1510 340 1520 360L1550 350L1568 385M1085 380L1095 375L1090 420L1115 460L1085 450",
      "M1130 605Q1130 580 1165 575Q1155 540 1185 545Q1170 505 1175 500Q1230 490 1260 510Q1310 560 1330 700Q1340 750 1320 765L1175 798Q1155 798 1150 780ZM1220 497Q1280 490 1310 540Q1350 600 1370 700Q1370 750 1320 765M1175 630L1205 640L1180 655M1270 608L1245 625L1275 632M1210 710Q1250 705 1270 685M1222 708Q1225 735 1245 735Q1270 725 1262 695M1240 700L1245 715M1235 787L1255 850Q1270 865 1288 850L1280 775",
      "M1568 625L1500 655Q1440 645 1425 655L1430 720Q1430 760 1410 780Q1390 830 1450 822Q1500 820 1520 870Q1540 910 1568 905M1085 780L1145 1000Q1150 1025 1115 1030L1122 1090Q1110 1100 1025 1055L840 1103Q825 1100 810 1042M1085 700Q1100 715 1085 735M1060 1010L1080 960M1088 1005L1100 965M1085 600a7 8 0 1 1 8 10",
      "M1205 860Q1165 880 1172 905Q1190 925 1205 905ZM1345 852Q1335 900 1355 912Q1375 920 1387 890ZM1440 875Q1425 910 1440 925Q1460 935 1468 910Z",
      "M1275 1110Q1245 1050 1258 1015Q1280 1000 1312 1027Q1370 990 1445 990Q1470 950 1500 960Q1520 990 1512 1035Q1540 1080 1525 1130Q1510 1165 1490 1175M1326 1075a21 22 0 1 0 42 0a21 22 0 1 0-42 0M1424 1048a21 22 0 1 0 42 0a21 22 0 1 0-42 0M1385 1085Q1400 1075 1412 1080L1403 1095ZM1403 1095Q1400 1115 1375 1112M1403 1095Q1420 1115 1430 1095M1475 1085L1480 1090M1488 1075L1493 1080M1535 1105L1568 1098M1145 1180Q1135 1130 1165 1130Q1180 1140 1190 1175",
      "M145 1117Q170 1045 255 1042Q350 1050 368 1117M262 1117Q265 1090 300 1105Q325 1085 335 1112M445 1117L445 1070Q450 1050 480 1048L730 1048Q755 1060 750 1117M505 1117L525 1108M550 1110L575 1110M30 1117Q50 1080 80 1117",
      "M1030 1200Q1110 1210 1120 1260M1040 1460L1110 1465Q1135 1470 1130 1500Q1125 1540 1105 1540L970 1530M1105 1465L1140 1425M1480 1420Q1500 1440 1520 1430M1405 1568L1430 1520M1450 1568L1568 1520M200 1568L240 1530L250 1560M300 1530L320 1568M380 1568L400 1530M490 1530L510 1550M630 1555L700 1530M780 1530L790 1568M830 1560Q850 1540 880 1560",
    ],
  },
];

function Wallpaper() {
  return (
    <Paper viewBox="0 240 1080 1680" preserveAspectRatio="xMidYMin slice" aria-hidden="true">
      {RINGS.map(([x, y, r], i) => <circle key={i} cx={x} cy={y} r={r} />)}
      {STARS.map((s, i) => <path key={i} d={starPath(s)} />)}
      {SPARKS.map((s, i) => <path key={i} d={sparkPath(s)} />)}
      {SHEETS.map((sheet, i) => (
        <g key={i} transform={sheet.move}>
          {sheet.paths.map((d, j) => <path key={j} d={d} />)}
        </g>
      ))}
      <text x="970" y="552" fontSize="70" fontFamily="Inter, sans-serif" transform="rotate(-10 970 552)">24</text>
    </Paper>
  );
}

/* ---------- parts ---------- */

function Tail({ side }: { side: Side }) {
  return (
    <TailShape $side={side} width="21" height="34" viewBox="0 0 21 34" aria-hidden="true">
      {side === "in" ? <path d="M21 0H6Q0 0 0 5Q0 8 2 10L21 33Z" /> : <path d="M0 0H15Q21 0 21 5Q21 8 19 10L0 33Z" />}
    </TailShape>
  );
}

type MessageProps = {
  side: Side;
  time: string;
  tail?: boolean;
  joined?: boolean;
  below?: boolean;
  quote?: React.ReactNode;
  children: React.ReactNode;
};

function Message({ side, time, tail = false, joined, below, quote, children }: MessageProps) {
  return (
    <Bubble $side={side} $tail={tail} $joined={joined}>
      {tail && <Tail side={side} />}
      {quote}
      <Content $afterQuote={!!quote}>
        <Words>{children}</Words>
        <Meta $below={below}>
          <time>{time}</time>
          {side === "out" && <Ticks />}
        </Meta>
      </Content>
    </Bubble>
  );
}

export default function App() {
  return (
    <Screen>
      <GlobalStyle />
      <Header>
        <StatusBar>
          <StatusGroup $gap={16}>
            <svg width="42" height="42" viewBox="0 0 42 42">
              <path d="M0 25L42 1L20 21L17 16Z" fill="#6fb9ac" stroke="#6fb9ac" strokeLinejoin="round" />
              <path d="M1 25L17 16L21 24L27 40Z" fill="#a9d6cd" stroke="#a9d6cd" strokeWidth="2" strokeLinejoin="round" />
            </svg>
            <svg width="36" height="36" viewBox="0 0 36 36">
              <rect y="1" width="35" height="34" rx="2" fill="#bfe0d9" />
              <g fill="none" stroke="#008069" strokeWidth="2.500">
                <path d="M5 14Q17.500 2 30 14M9 19Q17.500 10 26 19M13 23Q17.500 18 22 23" />
              </g>
              <circle cx="17.500" cy="26" r="2.300" fill="#008069" />
            </svg>
            <svg width="38" height="36" viewBox="0 0 38 36">
              <path d="M19 2.500L36 34H2Z" fill="#bfe0d9" stroke="#bfe0d9" strokeWidth="3" strokeLinejoin="round" />
              <path d="M16.500 12h5v11h-5zM16.500 26h5v5h-5z" fill="#008069" />
            </svg>
          </StatusGroup>
          <StatusGroup $gap={12}>
            <svg width="42" height="38" viewBox="0 0 42 38" fill="none" stroke="#bfe0d9">
              <circle cx="18" cy="20" r="17" fill="#bfe0d9" stroke="none" />
              <path d="M1 8L8 2M28 2L35 8" strokeWidth="5" />
              <path d="M7 32L3 37M29 32L33 37" strokeWidth="4" />
              <path d="M18 11V20H25" stroke="#008069" strokeWidth="3" />
            </svg>
            <svg width="44" height="38" viewBox="0 0 44 38">
              <path d="M3 6H17L26 15V34Q26 36 24 36H2Q0 36 0 34V8Q0 6 2 6Z" fill="#bfe0d9" />
              <path d="M6 2H20L31 13V30" fill="none" stroke="#bfe0d9" strokeWidth="3" />
              <rect x="6" y="18" width="14" height="13" rx="1.500" fill="none" stroke="#008069" strokeWidth="2" />
              <path d="M10 21V28M13 21V28M16 21V28M10 24.500H16" stroke="#008069" strokeWidth="1.700" />
            </svg>
            <NetType>
              4G
              <svg width="22" height="13" viewBox="0 0 22 13" fill="#bfe0d9">
                <path d="M3 2h4v5h3L5 13L0 7h3zM14 11h4V6h4L16 0L11 6h3z" />
              </svg>
            </NetType>
            <svg width="36" height="38" viewBox="0 0 36 38" fill="#bfe0d9">
              <path d="M0 37L8 29V37ZM13 37V23L17 20V37Z" />
              <path d="M22 37V15L36 1V37Z" fill="#4ca896" />
            </svg>
            <svg width="40" height="38" viewBox="0 0 40 38" fill="#bfe0d9">
              <path d="M0 37L8 29V37ZM13 37V24L17 20V37ZM23 37V14L27 10V37Z" />
              <path d="M32 37V5L36 1V37Z" fill="#4ca896" />
            </svg>
            <StatusText>84%</StatusText>
            <svg width="24" height="36" viewBox="0 0 24 36">
              <path d="M7 0H17Q18 0 18 1V4H23Q24 4 24 5V35Q24 36 23 36H1Q0 36 0 35V5Q0 4 1 4H6V1Q6 0 7 0Z" fill="#bfe0d9" />
              <path d="M4 7H20V10H4Z" fill="#5fb1a3" />
              <path d="M9 11H16L14 17H19L8 30L10 20H6Z" fill="#0f2a28" />
            </svg>
            <StatusText as="time">20:44</StatusText>
          </StatusGroup>
        </StatusBar>
        <AppBar>
          <Back type="button" aria-label="Kembali">
            <svg width="50" height="50" viewBox="0 0 50 50" fill="none" stroke="#fff" strokeWidth="6">
              <path d="M48 25H5M27 2L4 25L27 48" />
            </svg>
            <Avatar />
          </Back>
          <Title>Kasmiruddin1</Title>
          <Actions>
            <IconButton type="button" aria-label="Panggilan video">
              <svg width="62" height="42" viewBox="0 0 62 42" fill="#fff">
                <rect y="2" width="44" height="39" rx="6" />
                <path d="M46.500 15L57 7Q60.500 6 60.500 9V34Q60.500 37 57 36L46.500 28Z" />
              </svg>
            </IconButton>
            <IconButton type="button" aria-label="Panggilan suara">
              <svg width="52" height="52" viewBox="3 3 18 18" fill="#fff"><path d={PHONE} /></svg>
            </IconButton>
            <IconButton type="button" aria-label="Opsi lainnya">
              <svg width="24" height="50" viewBox="0 0 24 50" fill="#fff">
                <circle cx="12" cy="7" r="6" /><circle cx="12" cy="25" r="6" /><circle cx="12" cy="43" r="6" />
              </svg>
            </IconButton>
          </Actions>
        </AppBar>
      </Header>

      <Body>
        <Wallpaper />
        <Messages>
          <Message side="out" time="06.54" tail>slamat psgi pa ,hri ini jam betspa ke btn, tunggu inponys</Message>
          <Message side="in" time="09.34" tail>{"Maaf hr ini blm bs ke btn sy pak,  nnti klw sy mau ke sana sy inpokan"}</Message>
          <DayChip>29 Januari 2024</DayChip>
          <Bubble $side="out" $tail>
            <Tail side="out" />
            <CallCard>
              <CallDisc>
                <svg width="48" height="48" viewBox="0 0 48 48" fill="#474a4e">
                  <path d={PHONE} transform="translate(-6 -5) scale(2.500)" />
                  <path d="M26 22L41 7M29 5H42V19" fill="none" stroke="#474a4e" strokeWidth="4" />
                </svg>
              </CallDisc>
              <CallInfo>
                <CallTitle>Panggilan suara</CallTitle>
                <CallDetail><span>2 mnt</span><time>10.36</time></CallDetail>
              </CallInfo>
            </CallCard>
          </Bubble>
          <DayChip>Kemarin</DayChip>
          <Message side="out" time="19.16" tail>slamat malam pa besok sya ada kunjungan ke toko</Message>
          <Message side="out" time="19.17" joined below>udsh genapksh dananys pa<Pray /></Message>
          <Message
            side="in"
            time="20.56"
            tail
            quote={
              <QuoteWrap>
                <Quote>
                  <QuoteName>Anda</QuoteName>
                  udsh genapksh dananys pa<Pray small />
                </Quote>
              </QuoteWrap>
            }
          >
            {"Maaf msh blm pak,  kurang 10 lg, rencana tgl 7 sy ke btn pak"}<Pray />
          </Message>
        </Messages>

        <Composer onSubmit={(e) => e.preventDefault()}>
          <Field>
            <IconButton type="button" aria-label="Emoji">
              <svg width="64" height="64" viewBox="0 0 64 64" fill="#8596a0">
                <circle cx="32" cy="32" r="29.500" fill="none" stroke="#8596a0" strokeWidth="5" />
                <ellipse cx="23.500" cy="25" rx="4.300" ry="5.500" /><ellipse cx="40.500" cy="25" rx="4.300" ry="5.500" />
                <path d="M15 34Q32 39 49 34Q47 50 32 50Q17 50 15 34Z" />
                <path d="M19 39Q32 43 45 39" fill="none" stroke="#fff" strokeWidth="2.500" />
              </svg>
            </IconButton>
            <TextBox type="text" placeholder="Ketik pesan" aria-label="Ketik pesan" />
            <FieldActions>
              <IconButton type="button" aria-label="Lampirkan">
                <svg width="63" height="58" viewBox="0 0 63 58" fill="none" stroke="#8596a0" strokeWidth="5" strokeLinecap="round">
                  <path d="M34 5L55.500 26.500A15.500 15.500 0 0 1 34 50L5.500 21.500A11 11 0 0 1 21 5.500L44 28A6 6 0 0 1 35 37L20 21" />
                </svg>
              </IconButton>
              <IconButton type="button" aria-label="Kamera">
                <svg width="59" height="56" viewBox="0 0 59 56">
                  <path d="M10 8H14L18 3Q21 0 24 0H36Q39 0 42 3L46 8H49Q59 8 59 18V45Q59 55 49 55H10Q0 55 0 45V18Q0 8 10 8Z" fill="#8596a0" />
                  <circle cx="29.500" cy="29" r="12.300" fill="none" stroke="#fff" strokeWidth="4.700" />
                </svg>
              </IconButton>
            </FieldActions>
          </Field>
          <Record type="button" aria-label="Rekam pesan suara">
            <svg width="44" height="62" viewBox="0 0 44 62">
              <rect x="13" width="18" height="37" rx="9" fill="#fff" />
              <path d="M3 30Q4 47 22 47.500Q40 47 41 30M22 48V59" fill="none" stroke="#fff" strokeWidth="6" strokeLinecap="round" />
            </svg>
          </Record>
        </Composer>
      </Body>
    </Screen>
  );
}
